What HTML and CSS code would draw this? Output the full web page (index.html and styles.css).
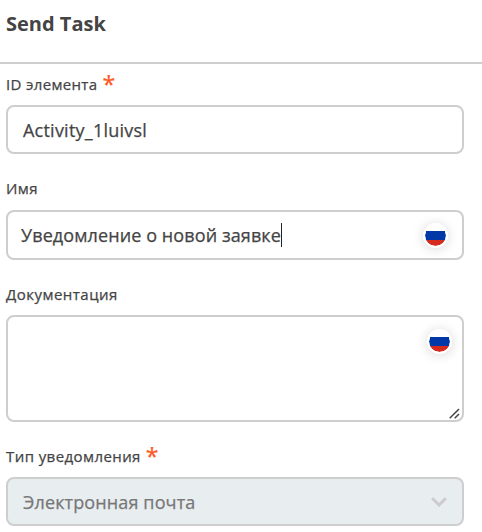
FILE: index.html
```html
<!DOCTYPE html>
<html lang="ru">
<head>
<meta charset="utf-8">
<title>Send Task</title>
<link rel="stylesheet" href="styles.css">
</head>
<body>
<main class="panel">
  <header class="panel-header"><h1 class="title">Send Task</h1></header>
  <section class="field field-id">
    <div class="label"><span class="label-id">ID элемента</span><span class="required">*</span></div>
    <div class="control"><span class="value value-id">Activity_1luivsl</span></div>
  </section>
  <section class="field field-name">
    <div class="label"><span class="label-name">Имя</span></div>
    <div class="control control-name"><span class="value value-name">Уведомление о новой заявке</span><span class="caret"></span><span class="flag"></span></div>
  </section>
  <section class="field field-doc">
    <div class="label"><span class="label-doc">Документация</span></div>
    <div class="control control-doc"><span class="flag"></span>
      <svg class="grip" width="11" height="11" viewBox="0 0 11 11"><path d="M.7 10.3 10 1M5.7 10.3 10 6" fill="none" stroke="#444" stroke-width="1.5"/></svg>
    </div>
  </section>
  <section class="field field-type">
    <div class="label"><span class="label-type">Тип уведомления</span><span class="required">*</span></div>
    <div class="control control-type"><span class="value value-type">Электронная почта</span>
      <svg class="chevron" width="16" height="10" viewBox="0 0 16 10"><path d="M2 2 8 8 14 2" fill="none" stroke="#ccc" stroke-width="3" stroke-linecap="round"/></svg>
    </div>
  </section>
</main>
</body>
</html>
```
FILE: styles.css
```css
* { box-sizing: border-box; }
body { margin: 0; background: #fff; color: #444; font-family: "Open Sans", "Noto Sans", sans-serif; overflow: hidden; }
.panel { width: 482px; height: 532px; }
.panel-header { height: 64px; padding: 10px 6px 0; border-bottom: 2px solid #cecece; }
.title { margin: 0; font-size: 20px; line-height: 28px; font-weight: 700; }
.field { width: 464px; padding-left: 6px; }
.field-id { padding-top: 10px; }
.field-name { padding-top: 24px; }
.field-doc { padding-top: 24px; }
.field-type { padding-top: 24px; }
.label { display: flex; height: 31px; font-size: 15px; line-height: 20px; font-weight: 500; letter-spacing: .42px; white-space: nowrap; -webkit-text-stroke: .25px currentColor; }
.label-id { letter-spacing: .34px; }
.label-doc { letter-spacing: .48px; }
.field-name .label { height: 32px; }
.required { margin: -2px 0 0 5px; color: #ff5722; font-size: 23px; line-height: 24px; font-weight: 500; letter-spacing: 0; }
.control { position: relative; display: flex; align-items: center; height: 49px; padding-left: 15px; border: 2px solid #cecece; border-radius: 8px; font-size: 18px; font-weight: 500; white-space: nowrap; }
.value { letter-spacing: .13px; -webkit-text-stroke: .25px currentColor; }
.value-id { letter-spacing: .23px; }
.control-name { height: 50px; padding: 0 14px 0 13px; }
.value-name { letter-spacing: .1px; }
.control-doc { height: 107px; padding: 12px 10px 0 0; align-items: flex-start; }
.control-type { padding-right: 15px; background: #e8edf0; color: #777; }
.caret { width: 1px; height: 24px; background: #222; }
.flag { width: 25px; height: 25px; margin-left: auto; border: 2px solid #fff; border-radius: 50%; background: linear-gradient(#fff 0 28%, #0038a8 28% 70%, #d52b1e 70%) padding-box; box-shadow: 0 1px 12px rgba(0, 0, 0, .16); }
.grip { position: absolute; right: 2px; bottom: 1px; }
.chevron { margin-left: auto; }
```
